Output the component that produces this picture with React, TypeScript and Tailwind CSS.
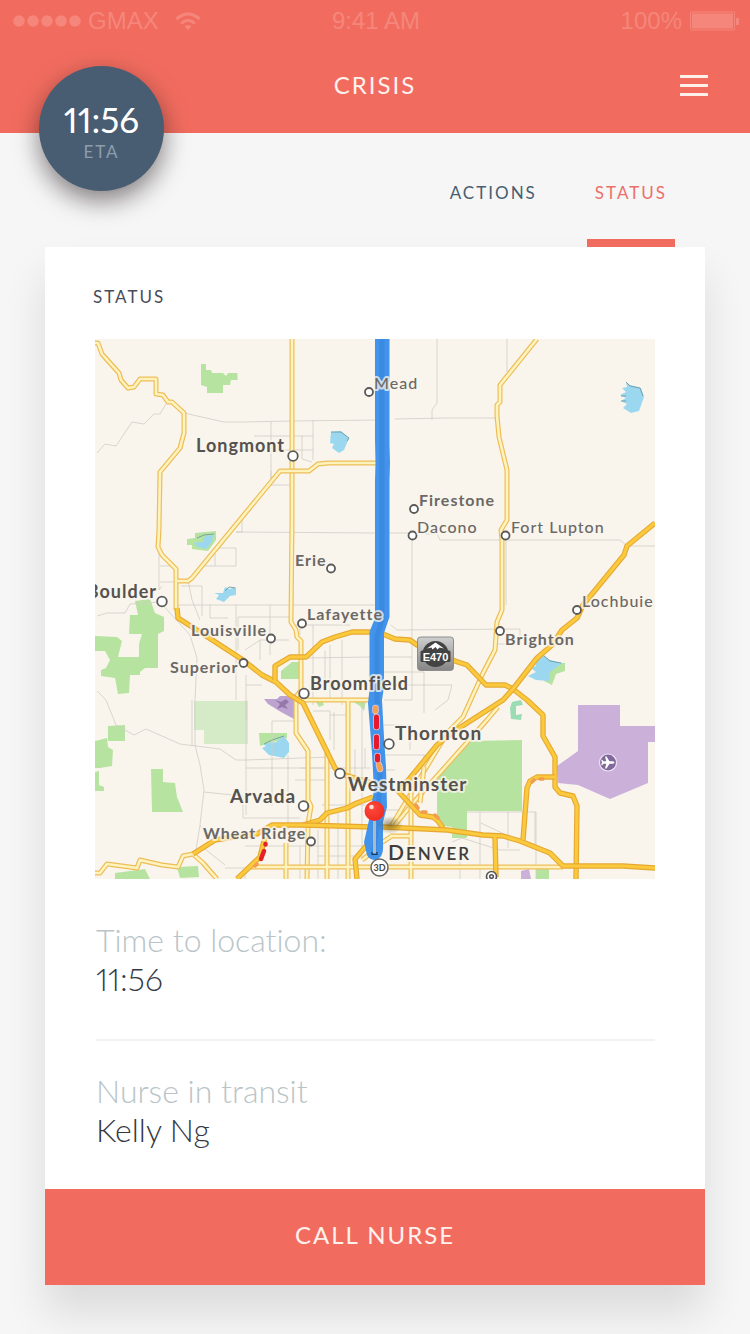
import React from "react";

type Town = {
  name: string;
  x: number;
  y: number;
  size?: "lg" | "xl";
  bold?: boolean;
  end?: boolean;
  dot: [number, number];
};

const towns: Town[] = [
  { name: "Mead", x: 374, y: 389, dot: [369, 392] },
  { name: "Longmont", x: 196, y: 452, size: "lg", bold: true, dot: [293, 456] },
  { name: "Firestone", x: 419, y: 506, bold: true, dot: [414, 509] },
  { name: "Dacono", x: 417, y: 533, dot: [412.5, 535.5] },
  { name: "Fort Lupton", x: 511, y: 533, dot: [505.5, 535.5] },
  { name: "Erie", x: 295, y: 566, bold: true, dot: [331, 568.5] },
  { name: "Boulder", x: 157, y: 598, size: "lg", bold: true, end: true, dot: [162, 601.5] },
  { name: "Lafayette", x: 307, y: 620, bold: true, dot: [302, 623.5] },
  { name: "Louisville", x: 191, y: 636, bold: true, dot: [271, 638.5] },
  { name: "Superior", x: 170, y: 673, bold: true, dot: [243.5, 663] },
  { name: "Broomfield", x: 310, y: 690, size: "lg", bold: true, dot: [304, 693.5] },
  { name: "Brighton", x: 505, y: 645, bold: true, dot: [500, 631] },
  { name: "Lochbuie", x: 582, y: 607, dot: [577, 610] },
  { name: "Thornton", x: 395, y: 740, size: "xl", bold: true, dot: [389, 744] },
  { name: "Westminster", x: 348, y: 791, size: "xl", bold: true, dot: [340, 773.5] },
  { name: "Arvada", x: 230, y: 803, size: "xl", bold: true, dot: [303.5, 806] },
  { name: "Wheat Ridge", x: 203, y: 839, bold: true, dot: [311, 841.5] },
];

const lanes = [
  "M292 339V520L291 622L296 630L297 637L301 641V690L296 697V733L308 751V800L311 806L308 824L307 879",
  "M95 343H98L102 354L119 373L121 380L128 388L134 387L140 379H156V394L163 395L168 402H172L184 413V433L180 448L160 472L159 530L158 547L162 555L176 569V610",
  "M378 463H328L318 464L309 471H280L192 578L188 581L177 581",
  "M537 339L500 385V402L497 405V416L499 437L507 470V520L501 530L502 540V610L497 622L495 650L483 673L463 717L447 733L392 825",
  "M498 707L487 720L413 803L395 825",
  "M424 767L420 803",
  "M301 700H378M348 700V879M327 750V879M286 843V879M250 867H563M411 780V879M390 836H411M370 850L392 836M362 860L380 846",
  "M95 873H100L107 864L137 868L140 860L162 865L178 867L183 856L193 854L203 863L217 879",
];

const highways = [
  "M177 608L178 618L200 632L243 660L262 675L276 682L290 695L303 703L335 768L341 774L372 783",
  "M275 680V666L290 657H306L322 642L335 637L352 632H378L395 639L410 640L417 645L455 661L467 665L486 685H505L513 689L527 700L543 715V736L555 757V787L560 793L573 796L577 806L576 879",
  "M655 523L627 546L624 555L583 605L577 618L562 630L552 645L537 658L513 689L503 700L453 732L437 745L410 778L398 791L420 815L433 817L438 821L443 828",
  "M193 854L215 840L233 837L257 834L272 825H303L320 820L327 813L347 808L357 803L373 797",
  "M303 825L372 827H383L447 830L483 835L503 836L520 841L550 853L563 866H577L623 866L655 868",
  "M523 840L527 788L530 781L537 777H555M495 837L496 877",
  "M265 837L260 857L237 879M367 845L355 859L357 879",
];

const locals = [
  "M184 413L224 422H244L292 421L378 420M166 404L160 414H154L144 424L132 422L116 446L105 444L97 453",
  "M271 422V486M313 420V460M254 436H313M271 450H313M302 436V459L312 462M271 471V485H290",
  "M437 339V403L432 410V420M395 419L447 418H498M507 339V372",
  "M159 546V590L162 586M160 566H175M205 566H236V548H215V566M236 532H242V520M236 532L378 533M97 616L107 613H125L130 604L160 602M160 602L190 635L197 658L195 700V745L200 765L204 790L200 825L196 850M160 582H175",
  "M181 586H202V616M175 605H375M236 604V700M188 580L192 600L200 620M210 604V618H228M238 617H289M238 617V650M270 605V655M245 650L260 640H289M300 635V620",
  "M313 650V705M330 645V700M342 640V705M305 658L370 657M325 651V690M260 640V660M246 685H262M246 675V720M296 625H350M313 625V650",
  "M97 691L106 700L116 725L134 735L146 729L180 744L220 749L236 760H246M246 700V815M192 746V700M204 792L243 796V818H300M246 760L330 757M246 768H370M272 721V740M272 721H296M272 740V806M288 755V830M300 768H326M313 711H330V740M330 715H346M334 712V750",
  "M205 849L225 865M200 825L212 845M225 868H245V879M245 846H380M300 846V879M318 830V879M338 810V879M362 700V850M322 805H370M318 856H380M295 780H326M355 749V780M365 748V768",
  "M389 533H412V700M425 534H437L440 540H620L627 546H655M391 625L397 630L520 629V644M506 540V605M497 644H508",
  "M383 657H412M384 672H424V713M384 685H452L448 700L435 710M384 700H412M384 725H410V750M424 755V780M385 770H395M385 755H425M385 810H405",
  "M480 812V879M508 812V848M535 812V848M467 812H536V879M481 823L506 835M452 842L462 838L500 850H520M460 850V879",
];

const labelClass = {
  xl: "text-[19px] font-bold tracking-[1px]",
  lg: "text-[18px] font-bold tracking-[1px]",
  bold: "text-[16px] font-bold tracking-[1px]",
  regular: "text-[16px] font-medium tracking-[1px]",
};

function Road({ d, width, edge, fill, core }: { d: string; width: number; edge: string; fill: string; core: number }) {
  return (
    <>
      <path d={d} stroke={edge} strokeWidth={width} />
      <path d={d} stroke={fill} strokeWidth={core} />
    </>
  );
}

function RouteMap() {
  return (
    <svg viewBox="95 339 560 540" role="img" aria-label="Route map to Denver" className="block h-auto w-full font-['Lato',sans-serif]">
      <defs>
        <linearGradient id="shield" x1="0" y1="0" x2="0" y2="1">
          <stop offset="0" stopColor="#cfcfcf" />
          <stop offset="1" stopColor="#858585" />
        </linearGradient>
        <radialGradient id="pin" cx="0.4" cy="0.35" r="0.7">
          <stop offset="0" stopColor="#ff4b3a" />
          <stop offset="1" stopColor="#ee2a22" />
        </radialGradient>
        <radialGradient id="pinShade">
          <stop offset="0" stopColor="#4a3c1c" stopOpacity="0.55" />
          <stop offset="1" stopColor="#4a3c1c" stopOpacity="0" />
        </radialGradient>
      </defs>
      <rect x="95" y="339" width="560" height="540" fill="#f9f5ed" />

      {/* parks */}
      <g fill="#b7e3a1">
        <path d="M201 364L206 364V370H211L212 373H223L226 376L228 373H237.500V380H231L230 385H223V393H207V387L201 385Z" />
        <path d="M187 539L195 538V533L216 531V540L208 551L192 549V545H187Z" />
        <path d="M135 601L150 599L155 613L164 617V631L158 634V668H145L140 672V675H130L129 693L118 694L115 678L101 676V670L106 668L110 660L105 651H95V636L117 637L122 641L118 657H139V644L142 634H129L130 615H138Z" />
        <path d="M281 671L292 662H299V679H281Z" />
        <path d="M108 726L125 725V741H108ZM95 741L107 738L108 747L113 750L112 766L100 768H95ZM95 772L99 771V785L104 787V791H95Z" />
        <path d="M151 769H163V782L175 783L177 797L183 812H152Z" />
        <path d="M115 873L145 869L150 879H115ZM177 867L198 866L199 877L180 878Z" />
        <path d="M470 741L522 740V811H467V838H452V827L437 825V775L445 768Z" />
        <path d="M536 869H549V879H536ZM552 662L565 663V671L556 674L552 685L544 681Z" />
        <path d="M259 733H287V738L260 746Z" />
        <path d="M512 702L521 700L523 705L516 706V715L522 714L521 720L511 719L510 708Z" fill="#9cdcb4" />
        <path d="M316 702L322 701L324 705L319 707ZM352 701H366L364 711L360 706Z" />
      </g>
      <path d="M194 701H248V744H204V730H194Z" fill="#d5ebc8" />

      {/* lakes */}
      <g fill="#9bd8ef">
        <path d="M331 432L341 431L349 438L344 450L339 453L332 448L334 444L330 443Z" />
        <path d="M626 382L630 385L641 388L644 397L639 411L631 413L623 408L627 404L621 401L626 398L620 395L626 392L622 388L627 387Z" />
        <path d="M194 543L203 542L204 537L213 535L212 542L206 549L198 547Z" />
        <path d="M214 593L223 593L225 587L230 589L236 587V595L230 596L224 602L216 599L219 595Z" />
        <path d="M263 744L276 742L284 736L289 743V752L284 758L269 755L262 748L266 746Z" />
        <path d="M543 655L550 660L562 663L550 672L549 681L536 680L528 676L536 672L531 668L536 666L534 661Z" />
      </g>
      <g fill="none" stroke="#6c9aa5" strokeWidth="0.9">
        <path d="M331 432L341 432L349 438L347 441M626 382L630 386L640 388L643 396M621 401H626M621 396H626M197 538L204 535L214 534M225 591L229 587L235 588M264 744L272 740L284 736M536 660L543 655L550 661L561 663" />
      </g>

      {/* airports */}
      <path d="M578 705H620V726H655V742H648V783L610 799L578 785L558 783L557 766L578 751Z" fill="#cbb0da" />
      <path d="M264 699L277 699L280 696H294V719L281 712L268 704Z" fill="#bda3d0" />
      <path d="M521 871L529 869L531 879H521Z" fill="#cbb0da" />
      <path d="M275 700L281 702L286 699L289 702L285 705L288 709L282 707L277 709L280 704Z" fill="#9577aa" />

      <g fill="none" stroke="#d0cdc6" strokeWidth="0.8">
        {locals.map((d) => (
          <path key={d} d={d} />
        ))}
      </g>
      <g fill="none" strokeLinejoin="round">
        {lanes.map((d) => (
          <Road key={d} d={d} width={5} edge="#edbd58" fill="#fff3bd" core={2.6} />
        ))}
        {highways.map((d) => (
          <Road key={d} d={d} width={5.4} edge="#e6a832" fill="#fac93c" core={3.2} />
        ))}
      </g>

      {/* slow traffic */}
      <g fill="none" strokeLinecap="round" stroke="#f39b4f" strokeWidth="3.500">
        <path d="M416 805L418 808M422 812L426 812M435 815L438 818M532 782L534 780M540 779L543 779M255 866L257 864" />
        <path d="M265.500 844V844.500M264 851L261 859" stroke="#e22128" strokeWidth="4.500" />
      </g>

      {/* driving route */}
      <g fill="none" strokeLinejoin="round">
        <path
          d="M375 339H389.500V445L390 463L389.500 480V617L384 633V687L382 700L384 737L386 767L387 807L383 822V845Q384 857 376 860Q369 860 367 855L364 842L369 820L374 790L372 753L368 703L369.500 690V632L375 618V480L375.500 463L375 440Z"
          fill="#4293ec"
        />
        <path d="M382 339V620L377 636V700L380 775L378 815L374 852" stroke="#3a8ae0" strokeWidth="5" />
        <path d="M376 704L380 772" stroke="#4293ec" strokeWidth="10" />
      </g>
      <g strokeLinecap="round" fill="none">
        <g stroke="#e9c6cf" strokeWidth="6.500">
          <path d="M375.500 708V711M376.500 717V727M376.500 737V747M377.500 756V760M379 765L380 769" />
        </g>
        <path d="M375.500 708V711M379 765L380 769" stroke="#f5a14c" strokeWidth="5" />
        <path d="M376.500 717V727M376.500 737V747M377.500 756V760" stroke="#e5182c" strokeWidth="5" />
      </g>

      {/* towns */}
      {towns.map((t) => (
        <g key={t.name}>
          <circle cx={t.dot[0]} cy={t.dot[1]} r={t.size ? 4.8 : 4} fill="#fff" stroke="#5b5a58" strokeWidth="1.800" />
          <text
            x={t.x}
            y={t.y}
            textAnchor={t.end ? "end" : "start"}
            stroke="#f9f5ed"
            strokeOpacity="0.75"
            strokeWidth="4"
            strokeLinejoin="round"
            paintOrder="stroke"
            fill={t.size ? "#55524e" : "#6b6865"}
            className={labelClass[t.size ?? (t.bold ? "bold" : "regular")]}
          >
            {t.name}
          </text>
        </g>
      ))}
      <text x="388" y="860" fill="#3f3d3b" stroke="#f9f5ed" strokeOpacity="0.75" strokeWidth="4" paintOrder="stroke" className="text-[21px] font-semibold tracking-[2px]">
        D<tspan className="text-[17px]">ENVER</tspan>
      </text>

      {/* toll road shield */}
      <rect x="417.500" y="637" width="36" height="33.500" rx="3" fill="url(#shield)" stroke="#8d8d8d" strokeWidth="1" />
      <circle cx="435.500" cy="654" r="13" fill="#434343" />
      <path d="M427 648.500L435.500 642.500L444 648.500L439.500 647.500L437.500 649.500L435.500 647L432.500 649.500L431.500 647.500Z" fill="#fff" />
      <rect x="420.500" y="650.500" width="30" height="11.500" rx="1.500" fill="#434343" />
      <text x="435.500" y="660.500" textAnchor="middle" fill="#fff" className="font-['Liberation_Sans',sans-serif] text-[11px] font-bold">
        E470
      </text>

      {/* airport badge */}
      <circle cx="608" cy="762.500" r="8.500" fill="#81699b" stroke="#eee4f3" strokeWidth="1.200" />
      <path
        d="M614.500 762.500Q614 761.300 612.500 761.300H609.500L606.500 756.500H605L606.300 761.300H603.500L602.200 759.700H601.200L601.900 762.500L601.200 765.300H602.200L603.500 763.700H606.300L605 768.500H606.500L609.500 763.700H612.500Q614 763.700 614.500 762.500Z"
        fill="#fff"
      />

      {/* destination pin */}
      <ellipse cx="390" cy="825" rx="13" ry="9" fill="url(#pinShade)" />
      <path d="M374.500 818V853" stroke="#a9bac9" strokeWidth="3" />
      <path d="M372 852V854.500H377V852" fill="none" stroke="#1f3550" strokeWidth="1.200" />
      <circle cx="374.500" cy="811" r="10" fill="url(#pin)" />
      <circle cx="371.500" cy="807" r="2.300" fill="#ffdcd8" />

      <circle cx="379.500" cy="867.500" r="8.500" fill="#fff" stroke="#666" strokeWidth="1.500" />
      <text x="379.500" y="870.500" textAnchor="middle" fill="#444" className="text-[9px] font-bold">
        3D
      </text>
      <g fill="#fff" stroke="#555" strokeWidth="1.600">
        <circle cx="491.500" cy="876.500" r="5" />
        <circle cx="491.500" cy="876.500" r="1.800" />
      </g>
    </svg>
  );
}

function StatusBar() {
  return (
    <div className="flex h-[42px] items-center justify-between pr-[11px] pl-[13px] font-['Liberation_Sans',sans-serif] text-[24px] leading-6 text-[#f5867b]">
      <div className="flex flex-1 items-center">
        <svg viewBox="0 0 68 12" className="h-3 w-[68px]" fill="currentColor" aria-hidden="true">
          {[6, 20, 34, 48, 62].map((cx) => (
            <circle key={cx} cx={cx} cy="6" r="5.800" />
          ))}
        </svg>
        <span className="ml-[7px]">GMAX</span>
        <svg viewBox="0 0 26 19" className="ml-4 h-[19px] w-[26px]" fill="none" stroke="currentColor" strokeWidth="3" aria-hidden="true">
          <path d="M1.500 7Q13 -3 24.500 7" />
          <path d="M6 11.500Q13 5 20 11.500" />
          <path d="M9.500 14.500Q13 11.500 16.500 14.500L13 18Z" fill="currentColor" stroke="none" />
        </svg>
      </div>
      <span>9:41 AM</span>
      <div className="flex flex-1 items-center justify-end gap-2">
        <span>100%</span>
        <svg viewBox="0 0 49 20" className="h-5 w-[49px]" aria-hidden="true">
          <rect x="0.500" y="1" width="44" height="18" rx="1" fill="none" stroke="currentColor" />
          <rect x="2" y="2.500" width="41" height="15" fill="currentColor" />
          <path d="M46 7H49V14H46Z" fill="currentColor" />
        </svg>
      </div>
    </div>
  );
}

function Detail({ label, value }: { label: string; value: string }) {
  return (
    <div className="text-[32px] leading-[39px] font-light proportional-nums [font-variant-ligatures:none]">
      <dt className="text-[#b9c4c8]">{label}</dt>
      <dd className="text-[#343843]">{value}</dd>
    </div>
  );
}

export default function App() {
  return (
    <div className="min-h-screen bg-[#f6f6f6] pb-[49px] font-['Lato',sans-serif]">
      <header className="relative bg-[#f16c5f]">
        <StatusBar />
        <div className="grid h-[91px] grid-cols-[1fr_auto_1fr] items-start px-[42px] pt-[29px]">
          <h1 className="col-start-2 text-[24px] leading-7 tracking-[2px] text-[#fff1ee]">CRISIS</h1>
          <button type="button" aria-label="Open menu" className="flex h-7 w-7 flex-col justify-center gap-[6px] justify-self-end">
            <span className="h-[3px] w-full bg-[#ffefeb]" />
            <span className="h-[3px] w-full bg-[#ffefeb]" />
            <span className="h-[3px] w-full bg-[#ffefeb]" />
          </button>
        </div>
        <div className="absolute top-[66px] left-[39px] flex h-[125px] w-[125px] flex-col items-center rounded-full bg-[#485d72] pt-8 shadow-[0_10px_24px_rgba(20,10,15,0.5)]">
          <span className="text-[35px] leading-[42px] text-white proportional-nums">11:56</span>
          <span className="text-[17px] leading-6 tracking-[2px] text-[#8c9dad]">ETA</span>
        </div>
      </header>

      <nav aria-label="Crisis sections" className="flex h-[114px] justify-end gap-[50px] pr-[75px] text-[17px] leading-6 tracking-[2px]">
        <a href="#actions" className="pt-12 text-[#485d72]">
          ACTIONS
        </a>
        <a href="#status" aria-current="page" className="border-b-8 border-[#f16c5f] px-2 pt-12 text-[#ec6f6a]">
          STATUS
        </a>
      </nav>

      <main className="mx-[45px] bg-white shadow-[0_28px_40px_rgba(0,0,0,0.11)]">
        <h2 className="px-12 pt-[38px] pb-[30px] text-[17px] leading-6 tracking-[2px] text-[#474c58]">STATUS</h2>
        <div className="px-[50px]">
          <RouteMap />
          <dl className="pt-[41px] pb-10 pl-px">
            <Detail label="Time to location:" value="11:56" />
            <div className="mt-[41px] mb-[30px] h-0.5 bg-[#f1f2f3]" />
            <Detail label="Nurse in transit" value="Kelly Ng" />
          </dl>
        </div>
        <button type="button" className="h-24 w-full bg-[#f16c5f] pb-1 text-[24px] leading-7 tracking-[2px] text-[#fff1ee]">
          CALL NURSE
        </button>
      </main>
    </div>
  );
}
